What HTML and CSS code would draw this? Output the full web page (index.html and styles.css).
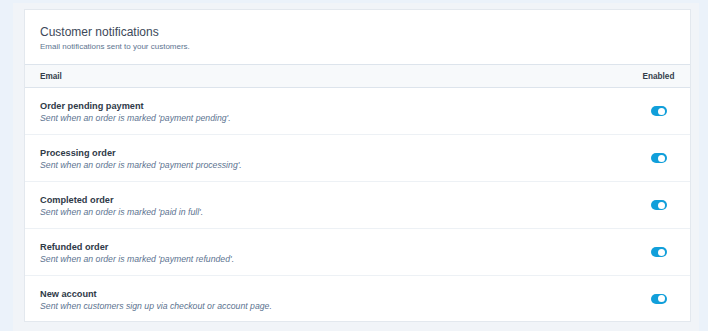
FILE: index.html
```html
<!DOCTYPE html>
<html>
<head>
<meta charset="utf-8">
<link rel="stylesheet" href="styles.css">
</head>
<body>
<div class="panel">
  <section class="card">
    <header class="card-head">
      <h1 class="title">Customer notifications</h1>
      <p class="subtitle">Email notifications sent to your customers.</p>
    </header>
    <div class="thead">
      <span>Email</span>
      <span class="col-enabled">Enabled</span>
    </div>
    <div class="row">
      <div class="info">
        <div class="name">Order pending payment</div>
        <div class="desc">Sent when an order is marked 'payment pending'.</div>
      </div>
      <div class="col-enabled"><span class="toggle"></span></div>
    </div>
    <div class="row">
      <div class="info">
        <div class="name">Processing order</div>
        <div class="desc">Sent when an order is marked 'payment processing'.</div>
      </div>
      <div class="col-enabled"><span class="toggle"></span></div>
    </div>
    <div class="row">
      <div class="info">
        <div class="name">Completed order</div>
        <div class="desc">Sent when an order is marked 'paid in full'.</div>
      </div>
      <div class="col-enabled"><span class="toggle"></span></div>
    </div>
    <div class="row">
      <div class="info">
        <div class="name">Refunded order</div>
        <div class="desc">Sent when an order is marked 'payment refunded'.</div>
      </div>
      <div class="col-enabled"><span class="toggle"></span></div>
    </div>
    <div class="row last">
      <div class="info">
        <div class="name">New account</div>
        <div class="desc">Sent when customers sign up via checkout or account page.</div>
      </div>
      <div class="col-enabled"><span class="toggle"></span></div>
    </div>
  </section>
</div>
</body>
</html>
```
FILE: styles.css
```css
* { box-sizing: border-box; }
html, body { margin: 0; padding: 0; }
body {
  background: #ebf2fa;
  font-family: "Liberation Sans", Arial, sans-serif;
  height: 331px;
  overflow: hidden;
}
.panel {
  margin: 3px 9px 0 13px;
  padding: 6px 8px 10px 11px;
  background: #f1f4f8;
  min-height: 328px;
}
.card {
  background: #fff;
  border: 1px solid #e3e8ee;
}
.card-head {
  height: 55px;
  padding: 14px 16px 0 15px;
  border-bottom: 1px solid #dde4ec;
}
.title {
  margin: 0;
  font-size: 12px;
  font-weight: 400;
  line-height: 16px;
  color: #3d4859;
}
.subtitle {
  margin: 1px 0 0;
  font-size: 8px;
  line-height: 12px;
  color: #5e7590;
}
.thead {
  display: flex;
  justify-content: space-between;
  align-items: center;
  height: 23px;
  padding: 0 15px;
  background: #f7f9fb;
  border-bottom: 1px solid #dde4ec;
  font-size: 8.2px;
  font-weight: 700;
  color: #333d4a;
}
.col-enabled {
  width: 33px;
  display: flex;
  justify-content: center;
}
.row {
  display: flex;
  justify-content: space-between;
  align-items: center;
  height: 47px;
  padding: 0 15px;
  border-bottom: 1px solid #edf1f5;
}
.row.last { border-bottom: 0; height: 45px; }
.info { padding-top: 2px; }
.name {
  font-size: 9.2px;
  font-weight: 700;
  line-height: 12px;
  color: #2f3a48;
}
.desc {
  font-size: 8.7px;
  font-style: italic;
  line-height: 12px;
  color: #5c7390;
}
.toggle {
  position: relative;
  display: block;
  width: 16px;
  height: 10px;
  border-radius: 5px;
  background: #119fda;
}
.toggle::after {
  content: "";
  position: absolute;
  top: 1.5px;
  right: 1.5px;
  width: 7px;
  height: 7px;
  border-radius: 50%;
  background: #fff;
}
```
